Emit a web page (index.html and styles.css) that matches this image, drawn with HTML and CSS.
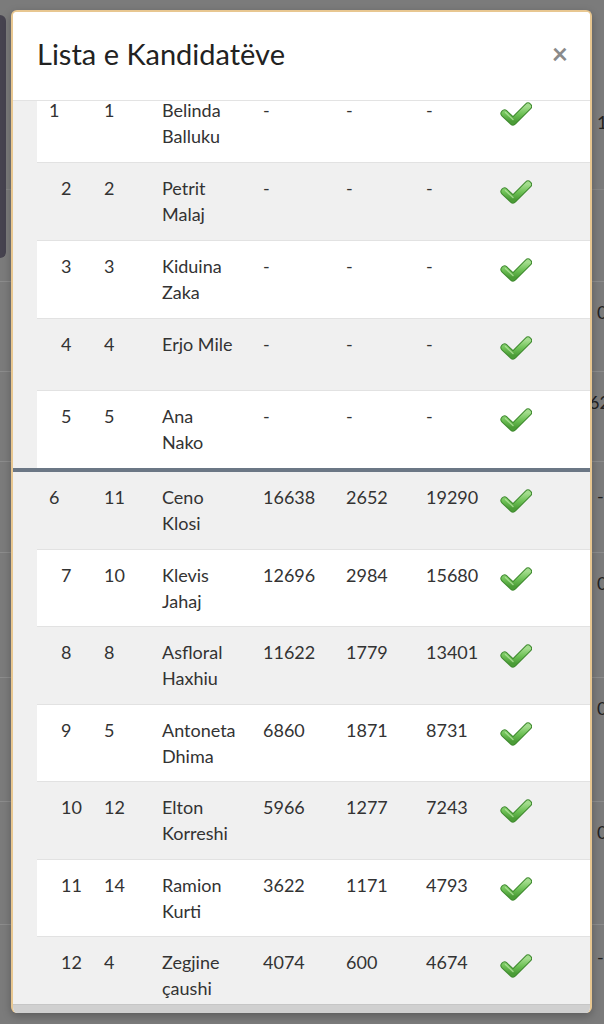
FILE: index.html
```html
<!DOCTYPE html>
<html lang="sq">
<head>
<meta charset="utf-8">
<title>Lista e Kandidatëve</title>
<link rel="stylesheet" href="styles.css">
</head>
<body>
<div class="page">
  <div class="bg-row r1"><span class="frag">1</span></div>
  <div class="bg-row r2"><span class="frag"></span></div>
  <div class="bg-row r3"><span class="frag">0</span></div>
  <div class="bg-row r4"><span class="frag frag-wide">62</span></div>
  <div class="bg-row r5"><span class="frag">-</span></div>
  <div class="bg-row r6"><span class="frag">0</span></div>
  <div class="bg-row r7"><span class="frag">0</span></div>
  <div class="bg-row r8"><span class="frag">0</span></div>
  <div class="bg-row r9"><span class="frag">-</span></div>
</div>
<div class="side-card"></div>

<div class="modal">
  <div class="modal-header">
    <h2 class="modal-title">Lista e Kandidatëve</h2>
    <span class="close">×</span>
  </div>
  <div class="modal-body">
    <table class="cand cand-top">
      <colgroup><col class="c1"><col class="c2"><col class="c3"><col class="c4"><col class="c5"><col class="c6"><col class="c7"></colgroup>
      <tbody>
        <tr class="w"><td class="n first">1</td><td>1</td><td class="name">Belinda Balluku</td><td>-</td><td>-</td><td>-</td><td class="ok"><svg class="chk"><use href="#check"/></svg></td></tr>
        <tr><td class="n">2</td><td>2</td><td class="name">Petrit Malaj</td><td>-</td><td>-</td><td>-</td><td class="ok"><svg class="chk"><use href="#check"/></svg></td></tr>
        <tr class="w"><td class="n">3</td><td>3</td><td class="name">Kiduina Zaka</td><td>-</td><td>-</td><td>-</td><td class="ok"><svg class="chk"><use href="#check"/></svg></td></tr>
        <tr><td class="n">4</td><td>4</td><td class="name">Erjo Mile</td><td>-</td><td>-</td><td>-</td><td class="ok"><svg class="chk"><use href="#check"/></svg></td></tr>
        <tr class="w"><td class="n">5</td><td>5</td><td class="name">Ana Nako</td><td>-</td><td>-</td><td>-</td><td class="ok"><svg class="chk"><use href="#check"/></svg></td></tr>
      </tbody>
    </table>
    <div class="separator"></div>
    <table class="cand cand-bottom">
      <colgroup><col class="c1"><col class="c2"><col class="c3"><col class="c4"><col class="c5"><col class="c6"><col class="c7"></colgroup>
      <tbody>
        <tr class="nb"><td class="n first">6</td><td>11</td><td class="name">Ceno Klosi</td><td>16638</td><td>2652</td><td>19290</td><td class="ok"><svg class="chk"><use href="#check"/></svg></td></tr>
        <tr class="w"><td class="n">7</td><td>10</td><td class="name">Klevis Jahaj</td><td>12696</td><td>2984</td><td>15680</td><td class="ok"><svg class="chk"><use href="#check"/></svg></td></tr>
        <tr><td class="n">8</td><td>8</td><td class="name">Asfloral Haxhiu</td><td>11622</td><td>1779</td><td>13401</td><td class="ok"><svg class="chk"><use href="#check"/></svg></td></tr>
        <tr class="w"><td class="n">9</td><td>5</td><td class="name">Antoneta Dhima</td><td>6860</td><td>1871</td><td>8731</td><td class="ok"><svg class="chk"><use href="#check"/></svg></td></tr>
        <tr><td class="n">10</td><td>12</td><td class="name">Elton Korreshi</td><td>5966</td><td>1277</td><td>7243</td><td class="ok"><svg class="chk"><use href="#check"/></svg></td></tr>
        <tr class="w"><td class="n">11</td><td>14</td><td class="name">Ramion Kurti</td><td>3622</td><td>1171</td><td>4793</td><td class="ok"><svg class="chk"><use href="#check"/></svg></td></tr>
        <tr><td class="n">12</td><td>4</td><td class="name">Zegjine çaushi</td><td>4074</td><td>600</td><td>4674</td><td class="ok"><svg class="chk"><use href="#check"/></svg></td></tr>
      </tbody>
    </table>
  </div>
  <div class="modal-foot"></div>
</div>

<svg class="defs" width="0" height="0" aria-hidden="true">
  <defs>
    <linearGradient id="gg" x1="0" y1="0" x2="0" y2="1">
      <stop offset="0" stop-color="#a3dc8d"/>
      <stop offset="0.5" stop-color="#6fc257"/>
      <stop offset="1" stop-color="#4b9c37"/>
    </linearGradient>
    <symbol id="check" viewBox="0 0 32 46">
      <path d="M4.5 16.5 L13 24.5 L28 9.5" fill="none" stroke="#3f8a2f" stroke-width="8" stroke-linecap="round" stroke-linejoin="round"/>
      <path d="M4.5 16.5 L13 24.5 L28 9.5" fill="none" stroke="url(#gg)" stroke-width="6" stroke-linecap="round" stroke-linejoin="round"/>
      <path d="M5.5 15.5 L13 22.5" fill="none" stroke="#bfeaa8" stroke-width="1.4" stroke-linecap="round" opacity="0.7"/>
    </symbol>
  </defs>
</svg>
</body>
</html>
```

FILE: styles.css
```css
* { box-sizing: border-box; }

html, body {
  margin: 0;
  padding: 0;
}

body {
  width: 604px;
  height: 1024px;
  overflow: hidden;
  background: #7b7b7b;
  font-family: Lato, "Open Sans", Arial, sans-serif;
  color: #333;
  position: relative;
}

/* background page seen through the backdrop */
.page {
  width: 604px;
}
.bg-row {
  border-bottom: 1px solid #8c8c8c;
  font-size: 18px;
  line-height: 20px;
  color: #222;
  padding-top: 20px;
}
.frag { display: block; margin-left: 597px; white-space: nowrap; }
.frag-wide { margin-left: 589px; }
.r1 { height: 190px; padding-top: 112px; border-bottom: 1px solid #868686; }
.r2 { height: 92px; }
.r3 { height: 90px; }
.r4 { height: 90px; }
.r5 { height: 91px; padding-top: 24px; }
.r6 { height: 125px; }
.r7 { height: 124px; }
.r8 { height: 123px; }
.r9 { height: 99px; border-bottom: 0; padding-top: 22px; }

.side-card {
  position: absolute;
  left: -10px;
  top: 15px;
  width: 16px;
  height: 243px;
  background: #46434f;
  border-radius: 6px;
}

.defs { position: absolute; }

/* modal */
.modal {
  position: absolute;
  left: 11px;
  top: 10px;
  width: 581px;
  height: 1003px;
  border: 2px solid #e8c791;
  border-bottom: 0;
  border-radius: 6px;
  background: #fff;
  overflow: hidden;
  display: flex;
  flex-direction: column;
  box-shadow: 0 3px 8px rgba(0,0,0,0.25);
}

.modal-header {
  height: 89px;
  flex: none;
  display: flex;
  align-items: center;
  justify-content: space-between;
  padding: 0 22px 0 24px;
  border-bottom: 1px solid #e3e3e3;
  background: #fff;
}

.modal-title {
  margin: 0;
  font-weight: 400;
  font-size: 29px;
  line-height: 34px;
  color: #222;
  letter-spacing: 0;
  padding-bottom: 4px;
}

.close {
  font-size: 28px;
  font-weight: 700;
  line-height: 1;
  color: #8a8a8a;
  padding-bottom: 6px;
}

.modal-body {
  flex: 1;
  overflow: hidden;
  background: #f0f0f0;
}

.separator {
  height: 4px;
  background: #6b7785;
}

.modal-foot {
  flex: none;
  height: 9px;
  background: #d0d0d0;
  border-top: 1px solid #c6c6c6;
}

.cand {
  border-collapse: collapse;
  table-layout: fixed;
  width: 553px;
  margin-left: 24px;
  font-size: 18px;
  line-height: 26px;
  color: #333;
}
.cand-top { margin-top: -17px; }

.c1 { width: 67px; }
.c2 { width: 58px; }
.c3 { width: 101px; }
.c4 { width: 83px; }
.c5 { width: 80px; }
.c6 { width: 74px; }
.c7 { width: 90px; }

.cand td {
  padding: 12px 0 12.5px 0;
  vertical-align: top;
  border-top: 1px solid #e2e2e2;
}
.cand-top td { padding-bottom: 13px; }
.cand tr.nb td { border-top: 0; padding-top: 12px; }
.cand tr.w { background: #fff; }

.cand td.n { padding-left: 24px; }
.cand td.n.first { padding-left: 12px; }
.cand td.name { padding-right: 28px; }

.chk {
  display: block;
  width: 32px;
  height: 46px;
}
```
